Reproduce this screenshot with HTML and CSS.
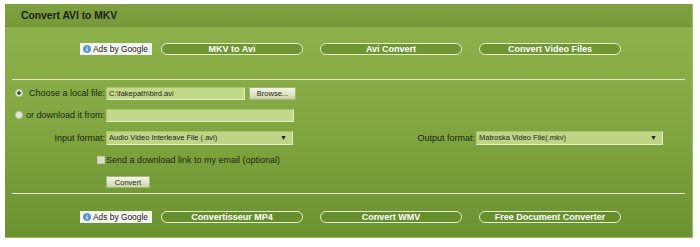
FILE: index.html
```html
<!DOCTYPE html>
<html>

<head>
  <meta charset="utf-8">
  <title>Convert AVI to MKV</title>
  <link rel="stylesheet" href="styles.css">
</head>

<body>
  <div class="panel">
    <div class="panel-head">Convert AVI to MKV</div>

    <div class="ad-row">
      <span class="ads-by">
        <svg class="info" width="8" height="8" viewBox="0 0 8 8">
          <circle cx="4" cy="4" r="3.6" fill="#5b9bd5" stroke="#2f6fb0" stroke-width="0.6"/>
          <rect x="3.5" y="3.3" width="1" height="3" fill="#fff"/>
          <rect x="3.5" y="1.6" width="1" height="1" fill="#fff"/>
        </svg>
        Ads by Google
      </span>
      <a class="pill" href="#">MKV to Avi</a>
      <a class="pill" href="#">Avi Convert</a>
      <a class="pill" href="#">Convert Video Files</a>
    </div>

    <hr class="rule rule-top">

    <form class="convert-form">
      <div class="row">
        <label class="label">
          <input type="radio" name="src" class="radio" checked>
          <span>Choose a local file:</span>
        </label>
        <div class="field field-file">C:\fakepath\bird.avi</div>
        <button type="button" class="btn btn-browse">Browse...</button>
      </div>

      <div class="row">
        <label class="label">
          <input type="radio" name="src" class="radio">
          <span>or download it from:</span>
        </label>
        <div class="field field-url"></div>
      </div>

      <div class="row row-formats">
        <span class="label">Input format:</span>
        <div class="select-box">
          <span>Audio Video Interleave File (.avi)</span>
          <span class="caret">&#9660;</span>
        </div>
        <span class="label label-out">Output format:</span>
        <div class="select-box">
          <span>Matroska Video File(.mkv)</span>
          <span class="caret">&#9660;</span>
        </div>
      </div>

      <div class="row">
        <span class="label"><input type="checkbox" class="check"></span>
        <span>Send a download link to my email (optional)</span>
      </div>

      <div class="row">
        <span class="label"></span>
        <button type="button" class="btn btn-convert">Convert</button>
      </div>
    </form>

    <hr class="rule">

    <div class="ad-row ad-row-bottom">
      <span class="ads-by">
        <svg class="info" width="8" height="8" viewBox="0 0 8 8">
          <circle cx="4" cy="4" r="3.6" fill="#5b9bd5" stroke="#2f6fb0" stroke-width="0.6"/>
          <rect x="3.5" y="3.3" width="1" height="3" fill="#fff"/>
          <rect x="3.5" y="1.6" width="1" height="1" fill="#fff"/>
        </svg>
        Ads by Google
      </span>
      <a class="pill" href="#">Convertisseur MP4</a>
      <a class="pill" href="#">Convert WMV</a>
      <a class="pill" href="#">Free Document Converter</a>
    </div>
  </div>
</body>

</html>
```

FILE: styles.css
```css
* {
  box-sizing: border-box;
  margin: 0;
  padding: 0;
}

body {
  background-color: #fff;
  font-family: "Liberation Sans", Arial, sans-serif;
  color: #1c2812;
  white-space: nowrap;
}

.panel {
  width: 688px;
  height: 234px;
  margin: 4px 0 0 5px;
  background: linear-gradient(to bottom, #8fb34c 0%, #84a944 45%, #6b9230 100%);
  border-right: 1px solid #9cbc62;
  border-bottom: 1px solid #9cbc62;
}

.panel-head {
  height: 23px;
  padding-left: 16px;
  display: flex;
  align-items: center;
  font-size: 10.3px;
  font-weight: bold;
  color: #1a2210;
  background: linear-gradient(to bottom, #80a141 0%, #76993a 100%);
  border-bottom: 1px solid #6f9236;
}

/* ad link rows */
.ad-row {
  display: flex;
  align-items: center;
  padding: 14px 0 0 75px;
  height: 30px;
}

.ad-row-bottom {
  padding-top: 15px;
}

.ads-by {
  display: flex;
  align-items: center;
  gap: 2px;
  width: 72px;
  height: 12px;
  padding-left: 3px;
  margin-right: 9px;
  background-color: #f3f6ee;
  font-size: 8.4px;
  color: #222;
}

.pill {
  width: 142px;
  height: 12px;
  margin-right: 17px;
  border: 1px solid #e4eed2;
  border-radius: 6px;
  background-color: #6f9633;
  color: #fff;
  font-size: 9px;
  font-weight: bold;
  text-decoration: none;
  display: flex;
  align-items: center;
  justify-content: center;
}

.ad-row-bottom .pill {
  background-color: #678e2d;
}

.rule {
  border: 0;
  height: 1px;
  margin: 0 7px;
  background-color: #e0ebc9;
}

.rule-top {
  margin-top: 22px;
}

/* form */
.convert-form {
  padding-top: 2px;
}

.row {
  display: flex;
  align-items: center;
  height: 22px;
  font-size: 9px;
}

.row-formats {
  height: 23px;
}

.label {
  width: 101px;
  flex-shrink: 0;
  display: flex;
  align-items: center;
  justify-content: flex-end;
  padding-right: 1px;
}

.label .radio {
  margin-right: auto;
}

.label-out {
  width: 183px;
}

.radio {
  appearance: none;
  width: 8px;
  height: 8px;
  margin-left: 10px;
  border-radius: 50%;
  background-color: #dfe6d6;
  border: 1px solid #c2ccb6;
}

.radio:checked {
  background: radial-gradient(circle, #4a4f44 0, #4a4f44 1.5px, #dfe6d6 2px);
}

.check {
  appearance: none;
  width: 8px;
  height: 8px;
  background-color: #d9e0cf;
  border: 1px solid #c2ccb6;
}

.field,
.select-box {
  height: 13px;
  background-color: #c3d98a;
  border: 1px solid;
  border-color: #aac371 #e4eec8 #e4eec8 #aac371;
  font-size: 7.5px;
  color: #222;
  display: flex;
  align-items: center;
  padding-left: 2px;
}

.field-file {
  width: 139px;
}

.field-url {
  width: 188px;
}

.select-box {
  width: 187px;
  height: 14px;
  justify-content: space-between;
  padding-right: 5px;
  background-color: #bdd585;
}

.caret {
  font-size: 7px;
  color: #1e2418;
}

.btn {
  height: 13px;
  font-family: "Liberation Sans", Arial, sans-serif;
  font-size: 7.5px;
  color: #222;
  background: linear-gradient(to bottom, #f2f5e6 0%, #dde6c4 55%, #c7d4a2 100%);
  border: 1px solid #a4b67e;
}

.btn-browse {
  width: 47px;
  margin-left: 4px;
}

.btn-convert {
  width: 44px;
  height: 12px;
}
```
